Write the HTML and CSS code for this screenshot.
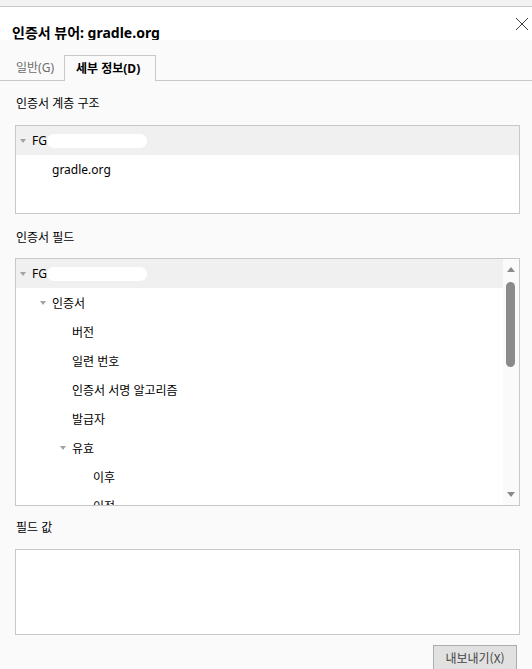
FILE: index.html
```html
<!DOCTYPE html>
<html lang="ko">
<head>
<meta charset="utf-8">
<link rel="stylesheet" href="styles.css">
</head>
<body>
<div class="win">
  <div class="topstrip"></div>
  <div class="titlebar">
    <div class="title">인증서 뷰어: gradle.org</div>
    <div class="closewrap"><svg class="close" width="14" height="14" viewBox="0 0 14 14"><path d="M1 1 L13 13 M13 1 L1 13" stroke="#444" stroke-width="1" fill="none"/></svg></div>
  </div>
  <div class="content">
    <div class="tabs">
      <div class="tab">일반(G)</div>
      <div class="tab active">세부 정보(D)</div>
    </div>
    <div class="label l1">인증서 계층 구조</div>
    <div class="box hier">
      <div class="row sel"><span class="tri"></span><span class="txt">FG</span><span class="redact"></span></div>
      <div class="row lv1"><span class="txt">gradle.org</span></div>
    </div>
    <div class="label l2">인증서 필드</div>
    <div class="box fields">
      <div class="list">
        <div class="row sel"><span class="tri"></span><span class="txt">FG</span><span class="redact"></span></div>
        <div class="row lv1"><span class="tri"></span><span class="txt">인증서</span></div>
        <div class="row lv2"><span class="txt">버전</span></div>
        <div class="row lv2"><span class="txt">일련 번호</span></div>
        <div class="row lv2"><span class="txt">인증서 서명 알고리즘</span></div>
        <div class="row lv2"><span class="txt">발급자</span></div>
        <div class="row lv2t"><span class="tri"></span><span class="txt">유효</span></div>
        <div class="row lv3"><span class="txt">이후</span></div>
        <div class="row lv3"><span class="txt">이전</span></div>
      </div>
      <div class="scrollbar">
        <span class="arrow up"></span>
        <span class="thumb"></span>
        <span class="arrow down"></span>
      </div>
    </div>
    <div class="label l3">필드 값</div>
    <div class="box value"></div>
    <div class="actions">
      <button class="btn">내보내기(X)</button>
    </div>
  </div>
</div>
</body>
</html>
```
FILE: styles.css
```css
html, body {
  margin: 0;
  padding: 0;
}
body {
  width: 532px;
  height: 669px;
  overflow: hidden;
  background: #fafafa;
  font-family: "Noto Sans", "Noto Sans CJK KR", sans-serif;
  font-size: 12px;
  color: #000;
}
.win {
  display: flex;
  flex-direction: column;
}
.topstrip {
  height: 6px;
  background: #f3f3f3;
  border-bottom: 1px solid #c9c9c9;
}
.titlebar {
  height: 33px;
  box-sizing: border-box;
  background: #fff;
  display: flex;
  justify-content: space-between;
  padding: 0 3px 0 12px;
}
.title {
  font-size: 14px;
  font-weight: bold;
  padding-top: 16px;
  line-height: 20px;
}
.closewrap {
  padding-top: 10px;
  height: 14px;
  width: 14px;
}
.close {
  display: block;
}
.content {
  display: flex;
  flex-direction: column;
  background: #fafafa;
}
.tabs {
  height: 40px;
  border-bottom: 1px solid #c8c8c8;
  display: flex;
  align-items: flex-end;
  padding-left: 12px;
}
.tab {
  height: 25px;
  line-height: 25px;
  padding: 0 4px;
  color: #6d6d6d;
  box-sizing: border-box;
  width: 52px;
}
.tab.active {
  width: 92px;
  height: 26px;
  margin-bottom: -1px;
  border: 1px solid #c8c8c8;
  border-bottom: none;
  background: #fafafa;
  color: #000;
  font-weight: bold;
  padding: 0 0 0 11px;
  line-height: 25px;
}
.label {
  margin-left: 16px;
  line-height: 16px;
  height: 16px;
}
.l1 { margin-top: 15px; }
.l2 { margin-top: 16px; }
.l3 { margin-top: 14px; }
.box {
  margin-left: 15px;
  width: 503px;
  border: 1px solid #c8c8c8;
  background: #fff;
}
.hier {
  margin-top: 13px;
  height: 87px;
}
.fields {
  margin-top: 12px;
  height: 246px;
  display: flex;
  overflow: hidden;
}
.list {
  flex: 1;
  overflow: hidden;
}
.value {
  margin-top: 13px;
  height: 84px;
}
.row {
  height: 29px;
  display: flex;
  align-items: center;
  white-space: nowrap;
}
.row.sel {
  background: #f0f0f0;
}
.tri {
  width: 0;
  height: 0;
  border-left: 3.5px solid transparent;
  border-right: 3.5px solid transparent;
  border-top: 4px solid #a2a2a2;
  margin-right: 6px;
}
.row.sel { padding-left: 4px; }
.row.lv1 { padding-left: 24px; }
.hier .row.lv1 { padding-left: 36px; }
.row.lv2 { padding-left: 56px; }
.row.lv2t { padding-left: 44px; }
.row.lv3 { padding-left: 77px; }
.redact {
  display: inline-block;
  width: 100px;
  height: 14px;
  background: #fff;
  border-radius: 7px;
}
.scrollbar {
  width: 16px;
  background: #fafafa;
  position: relative;
}
.arrow {
  position: absolute;
  left: 4px;
  width: 0;
  height: 0;
  border-left: 4px solid transparent;
  border-right: 4px solid transparent;
}
.arrow.up {
  top: 8px;
  border-bottom: 5px solid #8a8a8a;
}
.arrow.down {
  bottom: 8px;
  border-top: 5px solid #8a8a8a;
}
.thumb {
  position: absolute;
  left: 3px;
  top: 23px;
  width: 9px;
  height: 85px;
  border-radius: 5px;
  background: #8a8a8a;
}
.actions {
  display: flex;
  justify-content: flex-end;
  padding-right: 15px;
  margin-top: 10px;
}
.btn {
  width: 84px;
  height: 25px;
  border: 1px solid #adadad;
  background: #e1e1e1;
  font-family: "Noto Sans CJK KR", sans-serif;
  font-size: 12px;
  color: #444;
  padding: 0;
}
```
